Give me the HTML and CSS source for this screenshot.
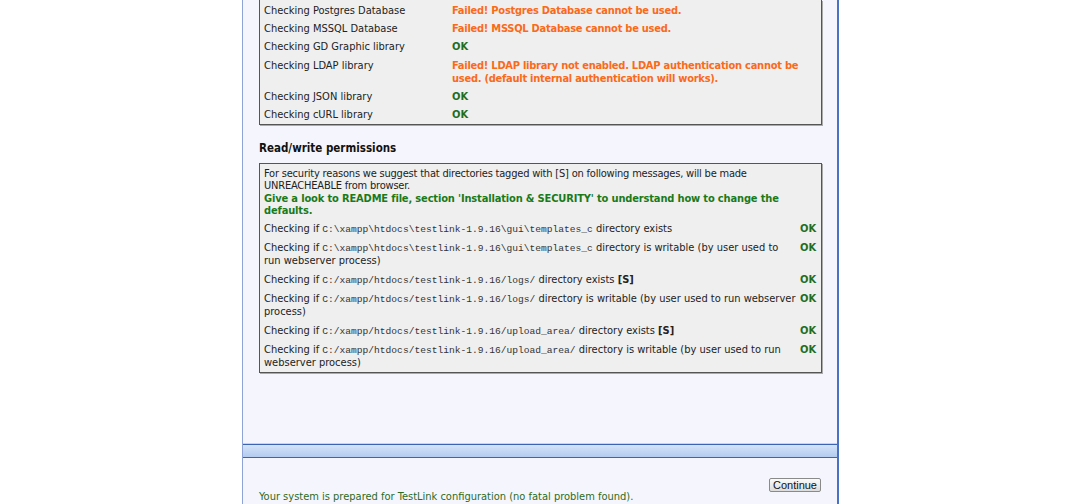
FILE: index.html
```html
<!DOCTYPE html>
<html>
<head>
<meta charset="utf-8">
<link rel="stylesheet" href="styles.css">
</head>
<body>
<div class="page">
  <div class="content">
    <table class="box checks">
      <tr><td class="lbl">Checking Postgres Database</td><td class="fail">Failed! Postgres Database cannot be used.</td></tr>
      <tr><td class="lbl">Checking MSSQL Database</td><td class="fail">Failed! MSSQL Database cannot be used.</td></tr>
      <tr><td class="lbl">Checking GD Graphic library</td><td class="ok">OK</td></tr>
      <tr class="tall"><td class="lbl">Checking LDAP library</td><td class="fail">Failed! LDAP library not enabled. LDAP authentication cannot be used. (default internal authentication will works).</td></tr>
      <tr><td class="lbl">Checking JSON library</td><td class="ok">OK</td></tr>
      <tr class="last"><td class="lbl">Checking cURL library</td><td class="ok">OK</td></tr>
    </table>

    <h2 class="heading">Read/write permissions</h2>

    <div class="box perms">
      <p class="note">For security reasons we suggest that directories tagged with [S] on following messages, will be made UNREACHEABLE from browser.<br><b class="hint">Give a look to README file, section 'Installation &amp; SECURITY' to understand how to change the defaults.</b></p>
      <table class="ptable">
        <tr><td>Checking if <code>C:\xampp\htdocs\testlink-1.9.16\gui\templates_c</code> directory exists</td><td class="ok">OK</td></tr>
        <tr><td>Checking if <code>C:\xampp\htdocs\testlink-1.9.16\gui\templates_c</code> directory is writable (by user used to run webserver process)</td><td class="ok">OK</td></tr>
        <tr><td>Checking if <code>C:/xampp/htdocs/testlink-1.9.16/logs/</code> directory exists <b>[S]</b></td><td class="ok">OK</td></tr>
        <tr><td>Checking if <code>C:/xampp/htdocs/testlink-1.9.16/logs/</code> directory is writable (by user used to run webserver process)</td><td class="ok">OK</td></tr>
        <tr><td>Checking if <code>C:/xampp/htdocs/testlink-1.9.16/upload_area/</code> directory exists <b>[S]</b></td><td class="ok">OK</td></tr>
        <tr><td>Checking if <code>C:/xampp/htdocs/testlink-1.9.16/upload_area/</code> directory is writable (by user used to run webserver process)</td><td class="ok">OK</td></tr>
      </table>
    </div>
  </div>
  <div class="band"></div>
  <div class="footer">
    <div class="actions"><button class="btn">Continue</button></div>
    <p class="ready">Your system is prepared for TestLink configuration (no fatal problem found).</p>
  </div>
</div>
</body>
</html>
```
FILE: styles.css
```css
html, body {
  margin: 0;
  padding: 0;
  background: #ffffff;
}
body {
  font-family: "DejaVu Sans Condensed", "DejaVu Sans", sans-serif;
  font-size: 11px;
  color: #222;
  overflow: hidden;
  height: 504px;
}
.page {
  width: 594px;
  margin-left: 242px;
  background: #f5f6fd;
  border-left: 1px solid #8ea4d6;
  border-right: 2px solid #4a72c4;
  min-height: 504px;
}
.content {
  padding: 0 15px 71px 16px;
}
.box {
  background: #efefef;
  border: 1px solid #555;
  box-shadow: 1px 1px 0 #aaa;
  width: 563px;
  box-sizing: border-box;
}
.checks {
  border-collapse: collapse;
  border-top: none;
}
.checks td {
  padding: 4px 4px 1px 4px;
  line-height: 13px;
  vertical-align: top;
}
.checks .tall td {
  padding-top: 5px;
}
.checks .last td {
  padding-bottom: 3px;
}
.checks td.lbl {
  width: 180px;
}
.fail {
  color: #fa6a1a;
  font-weight: bold;
  letter-spacing: -0.25px;
}
.ok {
  color: #1f6e1f;
  font-weight: bold;
}
.heading {
  font-size: 11.5px;
  font-weight: bold;
  margin: 16px 0 8px 0;
  line-height: 14px;
  color: #111;
}
.perms {
  padding: 4px 4px 0 4px;
}
.note {
  margin: 0 0 1px 0;
  line-height: 12.4px;
  letter-spacing: -0.2px;
}
.hint {
  color: #1a7a1a;
  letter-spacing: -0.15px;
}
.ptable {
  border-collapse: collapse;
  width: 100%;
}
.ptable td {
  padding: 3px 0 3px 0;
  line-height: 13px;
  vertical-align: top;
}
.ptable td.ok {
  width: 17px;
  padding-left: 4px;
}
code {
  font-family: "Liberation Mono", monospace;
  font-size: 9.6px;
  line-height: 1;
  color: #333;
}
.band {
  height: 12px;
  border-top: 1px solid #3d63b5;
  border-bottom: 1px solid #3d63b5;
  background: linear-gradient(#d5e4f8, #b2cbef);
  box-shadow: 0 -1px 0 #c8d4ee;
}
.footer {
  padding: 20px 16px 0 16px;
}
.actions {
  display: flex;
  justify-content: flex-end;
  padding-right: 0;
}
.btn {
  font-family: "Liberation Sans", Arial, sans-serif;
  font-size: 11px;
  padding: 0 3px;
  height: 14px;
  line-height: 12px;
  border: 1px solid #8a8a8a;
  border-radius: 2px;
  background: linear-gradient(#fbfbfb, #dcdcdc);
  color: #111;
}
.ready {
  margin: -2px 0 0 0;
  color: #2d6a1e;
  line-height: 13px;
}
```
